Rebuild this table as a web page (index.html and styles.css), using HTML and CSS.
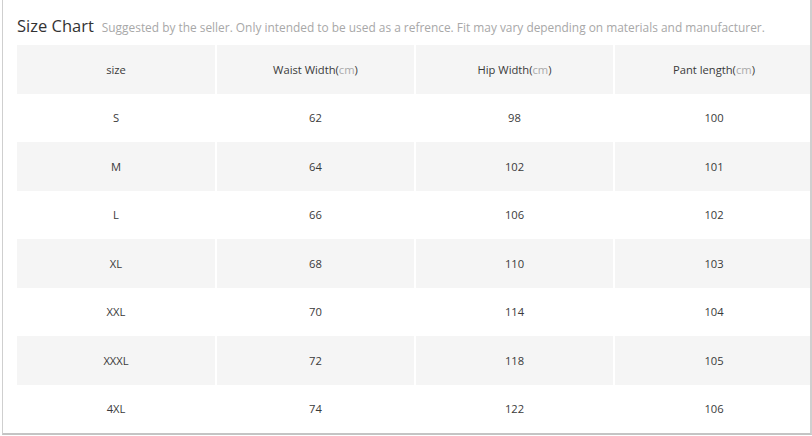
FILE: index.html
```html
<!DOCTYPE html>
<html>
<head>
<meta charset="utf-8">
<link rel="stylesheet" href="styles.css">
</head>
<body>
<div class="frame">
  <div class="title">
    <span class="main">Size Chart</span>
    <span class="sub">Suggested by the seller. Only intended to be used as a refrence. Fit may vary depending on materials and manufacturer.</span>
  </div>
  <table class="chart">
    <tr class="alt"><td>size</td><td>Waist Width(<span class="unit">cm</span>)</td><td>Hip Width(<span class="unit">cm</span>)</td><td>Pant length(<span class="unit">cm</span>)</td></tr>
    <tr><td>S</td><td>62</td><td>98</td><td>100</td></tr>
    <tr class="alt"><td>M</td><td>64</td><td>102</td><td>101</td></tr>
    <tr><td>L</td><td>66</td><td>106</td><td>102</td></tr>
    <tr class="alt"><td>XL</td><td>68</td><td>110</td><td>103</td></tr>
    <tr><td>XXL</td><td>70</td><td>114</td><td>104</td></tr>
    <tr class="alt"><td>XXXL</td><td>72</td><td>118</td><td>105</td></tr>
    <tr><td>4XL</td><td>74</td><td>122</td><td>106</td></tr>
  </table>
</div>
</body>
</html>
```
FILE: styles.css
```css
html, body {
  margin: 0;
  padding: 0;
  background: #fff;
}
body {
  font-family: "Open Sans", "Liberation Sans", sans-serif;
  color: #444;
}
.frame {
  margin-left: 2px;
  width: 810px;
  height: 435px;
  border-left: 1px solid #cfcfcf;
  border-right: 2px solid #cfcfcf;
  border-bottom: 2px solid #c4c4c4;
  padding-left: 14px;
  box-sizing: border-box;
  overflow: hidden;
}
.title {
  height: 45px;
  display: flex;
  align-items: baseline;
  gap: 8px;
  padding-top: 14px;
  box-sizing: border-box;
  white-space: nowrap;
}
.main {
  font-size: 16.5px;
  color: #333;
}
.sub {
  font-size: 11.9px;
  color: #a8a8a8;
}
.chart {
  width: 796px;
  table-layout: fixed;
  border-collapse: collapse;
}
.chart td {
  height: 48.5px;
  padding: 0;
  text-align: center;
  font-size: 11.2px;
  color: #3a3a3a;
  border-left: 2px solid #fff;
}
.chart td:first-child {
  border-left: 0;
}
.chart tr.alt td {
  background: #f5f5f5;
}
.unit {
  color: #aaa;
}
```
